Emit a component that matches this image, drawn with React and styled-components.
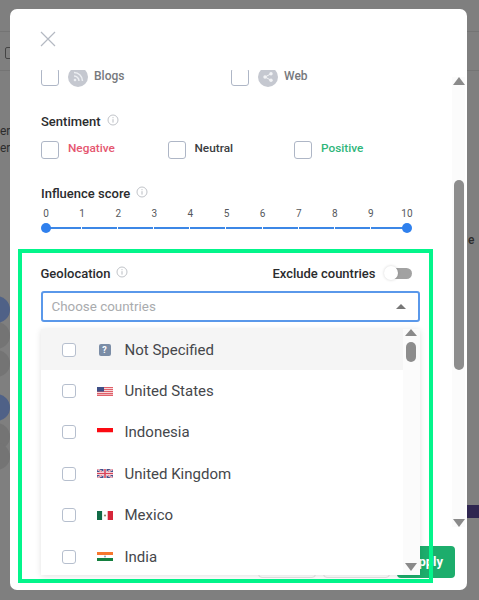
import React from 'react';
import styled, { createGlobalStyle } from 'styled-components';

const GlobalStyle = createGlobalStyle`
  html, body {
    margin: 0;
    padding: 0;
    background: #7f7f7f;
  }
  * {
    box-sizing: border-box;
  }
`;

const Page = styled.div`
  position: relative;
  width: 479px;
  height: 600px;
  padding: 9px 12px 10px 10px;
  overflow: hidden;
  background: #7f7f7f;
  font-family: Roboto, "Liberation Sans", sans-serif;
`;

// bits of the page behind the modal
const BackLine = styled.div`
  position: absolute;
  left: 0;
  right: 0;
  top: ${(p) => p.$top}px;
  height: 1px;
  background: #747474;
`;

const BackText = styled.span`
  position: absolute;
  left: ${(p) => p.$left}px;
  top: ${(p) => p.$top}px;
  font-size: 12px;
  font-weight: ${(p) => p.$weight || 400};
  color: #2c2c2c;
`;

const BackBlob = styled.div`
  position: absolute;
  left: -17px;
  top: ${(p) => p.$top}px;
  width: ${(p) => p.$size}px;
  height: ${(p) => p.$size}px;
  border-radius: 50%;
  background: ${(p) => p.$color};
`;

const BackBar = styled.div`
  position: absolute;
  left: 467px;
  top: 505px;
  width: 12px;
  height: 13px;
  background: #2f2650;
`;

const BackIcon = styled.div`
  position: absolute;
  left: 5px;
  top: 47px;
  width: 8px;
  height: 12px;
  border: 1.5px solid #444;
  border-radius: 2px;
`;

const Modal = styled.div`
  position: relative;
  width: 457px;
  height: 581px;
  background: #fff;
  border-radius: 7px;
  display: flex;
  flex-direction: column;
  overflow: hidden;
`;

const CloseRow = styled.div`
  height: 61px;
  flex: none;
  padding: 22px 0 0 30px;
`;

const CloseIcon = styled.svg`
  display: block;
  width: 16px;
  height: 16px;
  stroke: #b4b9c2;
  stroke-width: 1.2;
  fill: none;
`;

const Body = styled.div`
  flex: 1;
  padding-left: 31px;
  overflow: hidden;
  display: flex;
  flex-direction: column;
`;

const SourceRow = styled.div`
  display: flex;
  align-items: flex-start;
  margin-top: -2px;
  height: 18px;
`;

const Source = styled.div`
  width: 190px;
  display: flex;
  align-items: flex-start;
  gap: 9px;
`;

const Check = styled.span`
  display: block;
  flex: none;
  width: 18px;
  height: 18px;
  background: #fff;
  border: 1px solid #aeb6c6;
  border-radius: 3px;
`;

const SourceBadge = styled.span`
  flex: none;
  width: 20px;
  height: 20px;
  margin-top: -1px;
  border-radius: 50%;
  background: #c5c8d0;
  display: flex;
  align-items: center;
  justify-content: center;
`;

const SourceName = styled.span`
  font-size: 12px;
  font-weight: 500;
  line-height: 14px;
  margin: 1px 0 0 -3px;
  color: #77797d;
`;

const Heading = styled.div`
  display: flex;
  align-items: center;
  gap: 6px;
  margin-top: ${(p) => p.$top || 0}px;
  height: 16px;
  font-size: 13px;
  font-weight: 500;
  color: #2b2c2e;
`;

const InfoIcon = styled.svg`
  display: block;
  width: 12px;
  height: 12px;
  margin-top: -3px;
  fill: none;
  stroke: #b9bcc2;
`;

const SentimentRow = styled.div`
  display: flex;
  margin-top: 12px;
  height: 18px;
`;

const Sentiment = styled.div`
  width: 126.5px;
  display: flex;
  align-items: flex-start;
  gap: 9px;
  font-size: 11.8px;
  font-weight: 500;
  line-height: 15px;
  color: ${(p) => p.$color};
`;

const TickRow = styled.div`
  display: grid;
  grid-template-columns: repeat(11, 36.1px);
  margin: 6px 0 0 -13px;
  height: 14px;
`;

const Tick = styled.span`
  text-align: center;
  font-size: 10px;
  line-height: 14px;
  color: #55585c;
`;

const Track = styled.div`
  position: relative;
  display: flex;
  width: 361px;
  margin: 6px 0 0 5px;
  height: 2px;
`;

const TrackPart = styled.span`
  flex: 1;
  background: #3c87e6;
  border-right: 1px solid #fff;
  &:last-of-type {
    border-right: 0;
  }
`;

const Handle = styled.span`
  position: absolute;
  top: -4px;
  ${(p) => (p.$end ? 'right: -5px;' : 'left: -5px;')}
  width: 10px;
  height: 10px;
  border-radius: 50%;
  background: #2f80ed;
`;

const Highlight = styled.section`
  position: relative;
  z-index: 3;
  flex: none;
  width: 415px;
  height: 334px;
  margin: 20px 0 0 -23px;
  padding: 12px 9.5px 0 18.5px;
  border: 4.5px solid #03f58b;
`;

const GeoHead = styled.div`
  display: flex;
  align-items: center;
  justify-content: space-between;
  height: 16px;
  padding-right: 8px;
`;

const ToggleLabel = styled.div`
  display: flex;
  align-items: center;
  gap: 8px;
  font-size: 13px;
  font-weight: 500;
  color: #2b2c2e;
`;

const Toggle = styled.span`
  position: relative;
  display: block;
  width: 28px;
  height: 11px;
  padding-left: 9px;
  &::before {
    content: "";
    display: block;
    height: 100%;
    background: #a2a2a2;
    border-radius: 0 6px 6px 0;
  }
  &::after {
    content: "";
    position: absolute;
    left: 0;
    top: -2px;
    width: 14px;
    height: 14px;
    border-radius: 50%;
    background: #fff;
    box-shadow: 0 0 3px rgba(0, 0, 0, 0.18);
  }
`;

const SelectBox = styled.div`
  display: flex;
  align-items: center;
  justify-content: space-between;
  height: 31px;
  margin-top: 10px;
  padding: 0 12px 0 9px;
  border: 2px solid #5a98ea;
  border-radius: 3px;
  background: #fff;
  font-size: 13.4px;
  color: #a9abae;
`;

const Caret = styled.span`
  display: block;
  flex: none;
  width: 0;
  height: 0;
  border-left: ${(p) => p.$size}px solid transparent;
  border-right: ${(p) => p.$size}px solid transparent;
  ${(p) =>
    p.$down
      ? `border-top: ${p.$height}px solid #8a8a8a;`
      : `border-bottom: ${p.$height}px solid ${p.$color || '#8a8a8a'};`}
`;

const Dropdown = styled.div`
  display: flex;
  height: 246px;
  margin-top: 7px;
  background: #fff;
  box-shadow: 0 1px 6px rgba(0, 0, 0, 0.12);
`;

const Options = styled.div`
  width: 362px;
  flex: none;
  overflow: hidden;
`;

const Option = styled.div`
  display: flex;
  align-items: center;
  height: 41.4px;
  padding-left: 21px;
  background: ${(p) => (p.$active ? '#f5f5f5' : '#fff')};
  font-size: 15px;
  color: #45474b;
`;

const OptionCheck = styled.span`
  display: block;
  flex: none;
  width: 14px;
  height: 14px;
  background: #fff;
  border: 1px solid #b6bfce;
  border-radius: 3px;
`;

const FlagSlot = styled.span`
  display: flex;
  flex: none;
  justify-content: center;
  width: 16px;
  margin: 0 12px 0 21px;
`;

const Flag = styled.svg`
  display: block;
  width: 16px;
  height: 9px;
`;

const UnknownFlag = styled.span`
  display: block;
  width: 12px;
  height: 12px;
  border-radius: 2px;
  background: #7b8da6;
  color: #fff;
  font-size: 9px;
  font-weight: 700;
  line-height: 12px;
  text-align: center;
`;

const InnerRail = styled.div`
  flex: 1;
  display: flex;
  flex-direction: column;
  align-items: center;
  padding: 0 0 4px 0;
  background: #fbfbfb;
`;

const InnerThumb = styled.span`
  display: block;
  width: 10px;
  height: 20px;
  margin-top: 6px;
  border-radius: 5px;
  background: #8d8d8d;
`;

const OuterRail = styled.div`
  position: absolute;
  left: 442px;
  top: 68px;
  width: 13px;
  height: 450px;
  display: flex;
  flex-direction: column;
  align-items: center;
  background: #fbfbfb;
`;

const OuterThumb = styled.span`
  display: block;
  width: 10px;
  height: 190px;
  margin-top: 95px;
  border-radius: 5px;
  background: #8d8d8d;
`;

const RailSpace = styled.span`
  flex: 1;
`;

const Footer = styled.div`
  position: absolute;
  z-index: 1;
  right: 12px;
  top: 537px;
  display: flex;
  gap: 7px;
`;

const FootButton = styled.span`
  display: block;
  width: ${(p) => p.$width}px;
  height: 32px;
  padding-right: 12px;
  border-radius: 4px;
  font-size: 13px;
  font-weight: 700;
  line-height: 32px;
  text-align: right;
  color: #fff;
  background: ${(p) => (p.$primary ? '#1dad6c' : '#fff')};
  border: ${(p) => (p.$primary ? '0' : '1px solid #e4e4e4')};
`;

const Cross = () => (
  <CloseIcon viewBox="0 0 16 16">
    <path d="M1 1l14 14M15 1L1 15" />
  </CloseIcon>
);

const Info = () => (
  <InfoIcon viewBox="0 0 12 12">
    <circle cx="6" cy="6" r="5" strokeWidth="0.9" />
    <path d="M6 5.2v3.4M6 3.2v1" strokeWidth="1" />
  </InfoIcon>
);

const RssIcon = () => (
  <svg width="12" height="12" viewBox="0 0 12 12" fill="none" stroke="#eceef2" strokeWidth="1.5">
    <path d="M2 1.5a8.5 8.5 0 0 1 8.5 8.5M2 5a5 5 0 0 1 5 5" />
    <circle cx="3" cy="9" r="1.3" fill="#eceef2" stroke="none" />
  </svg>
);

const ShareIcon = () => (
  <svg width="12" height="12" viewBox="0 0 12 12" fill="#f2f3f5" stroke="#f2f3f5">
    <path d="M3 6l6-3.2M3 6l6 3.2" strokeWidth="1" />
    <circle cx="3" cy="6" r="1.7" stroke="none" />
    <circle cx="9" cy="2.8" r="1.7" stroke="none" />
    <circle cx="9" cy="9.2" r="1.7" stroke="none" />
  </svg>
);

const UsFlag = () => (
  <Flag viewBox="0 0 16 9">
    <rect width="16" height="9" fill="#fff" />
    <path d="M0 .6h16M0 2.6h16M0 4.6h16M0 6.6h16M0 8.4h16" stroke="#e0606a" strokeWidth="1.1" />
    <rect width="7" height="4.6" fill="#3f4f86" />
  </Flag>
);

const IdFlag = () => (
  <Flag viewBox="0 0 16 9">
    <rect width="16" height="4.5" fill="#fb0a12" />
    <rect y="4.5" width="16" height="4.5" fill="#fff" />
  </Flag>
);

const UkFlag = () => (
  <Flag viewBox="0 0 16 9">
    <rect width="16" height="9" fill="#47508a" />
    <path d="M0 0l16 9M16 0L0 9" stroke="#fff" strokeWidth="1.8" />
    <path d="M0 0l16 9M16 0L0 9" stroke="#d8445a" strokeWidth="0.7" />
    <path d="M8 0v9M0 4.5h16" stroke="#fff" strokeWidth="3" />
    <path d="M8 0v9M0 4.5h16" stroke="#d8445a" strokeWidth="1.6" />
  </Flag>
);

const MxFlag = () => (
  <Flag viewBox="0 0 16 9">
    <rect width="5.3" height="9" fill="#116b47" />
    <rect x="5.3" width="5.4" height="9" fill="#fff" />
    <rect x="10.7" width="5.3" height="9" fill="#d6263a" />
    <circle cx="8" cy="4.5" r="1.1" fill="#8f8a6a" />
  </Flag>
);

const InFlag = () => (
  <Flag viewBox="0 0 16 9">
    <rect width="16" height="3" fill="#f7772e" />
    <rect y="3" width="16" height="3" fill="#fff" />
    <rect y="6" width="16" height="3" fill="#14803f" />
    <circle cx="8" cy="4.5" r="1" fill="#9aa0b8" />
  </Flag>
);

const countries = [
  { name: 'Not Specified', flag: <UnknownFlag>?</UnknownFlag>, active: true },
  { name: 'United States', flag: <UsFlag /> },
  { name: 'Indonesia', flag: <IdFlag /> },
  { name: 'United Kingdom', flag: <UkFlag /> },
  { name: 'Mexico', flag: <MxFlag /> },
  { name: 'India', flag: <InFlag /> },
];

const ticks = [0, 1, 2, 3, 4, 5, 6, 7, 8, 9, 10];

export default function App() {
  return (
    <Page>
      <GlobalStyle />
      <BackLine $top={31} />
      <BackLine $top={70} />
      <BackIcon />
      <BackText $left={0} $top={124}>er</BackText>
      <BackText $left={0} $top={141}>er</BackText>
      <BackBlob $top={322} $size={27} $color="#747474" />
      <BackBlob $top={350} $size={27} $color="#747474" />
      <BackBlob $top={423} $size={27} $color="#747474" />
      <BackBlob $top={443} $size={27} $color="#747474" />
      <BackBlob $top={296} $size={27} $color="#4f6187" />
      <BackBlob $top={394} $size={27} $color="#4f6187" />
      <BackText $left={468} $top={233} $weight={500}>e</BackText>
      <BackBar />

      <Modal>
        <CloseRow>
          <Cross />
        </CloseRow>

        <Body>
          <SourceRow>
            <Source>
              <Check />
              <SourceBadge><RssIcon /></SourceBadge>
              <SourceName>Blogs</SourceName>
            </Source>
            <Source>
              <Check />
              <SourceBadge><ShareIcon /></SourceBadge>
              <SourceName>Web</SourceName>
            </Source>
          </SourceRow>

          <Heading $top={27}>
            Sentiment <Info />
          </Heading>
          <SentimentRow>
            <Sentiment $color="#e5566f"><Check />Negative</Sentiment>
            <Sentiment $color="#3b3d41"><Check />Neutral</Sentiment>
            <Sentiment $color="#2fb67a"><Check />Positive</Sentiment>
          </SentimentRow>

          <Heading $top={26}>
            Influence score <Info />
          </Heading>
          <TickRow>
            {ticks.map((t) => <Tick key={t}>{t}</Tick>)}
          </TickRow>
          <Track>
            {ticks.slice(1).map((t) => <TrackPart key={t} />)}
            <Handle />
            <Handle $end />
          </Track>

          <Highlight>
            <GeoHead>
              <Heading>
                Geolocation <Info />
              </Heading>
              <ToggleLabel>
                Exclude countries
                <Toggle />
              </ToggleLabel>
            </GeoHead>
            <SelectBox>
              Choose countries
              <Caret $size={5} $height={5} $color="#777" />
            </SelectBox>
            <Dropdown>
              <Options>
                {countries.map((c) => (
                  <Option key={c.name} $active={c.active}>
                    <OptionCheck />
                    <FlagSlot>{c.flag}</FlagSlot>
                    {c.name}
                  </Option>
                ))}
              </Options>
              <InnerRail>
                <Caret $size={6} $height={7} />
                <InnerThumb />
                <RailSpace />
                <Caret $down $size={6} $height={8} />
              </InnerRail>
            </Dropdown>
          </Highlight>
        </Body>

        <OuterRail>
          <Caret $size={6} $height={8} />
          <OuterThumb />
          <RailSpace />
          <Caret $down $size={6} $height={8} />
        </OuterRail>

        <Footer>
          <FootButton $width={58} />
          <FootButton $width={67} />
          <FootButton $width={58} $primary>Apply</FootButton>
        </Footer>
      </Modal>
    </Page>
  );
}
